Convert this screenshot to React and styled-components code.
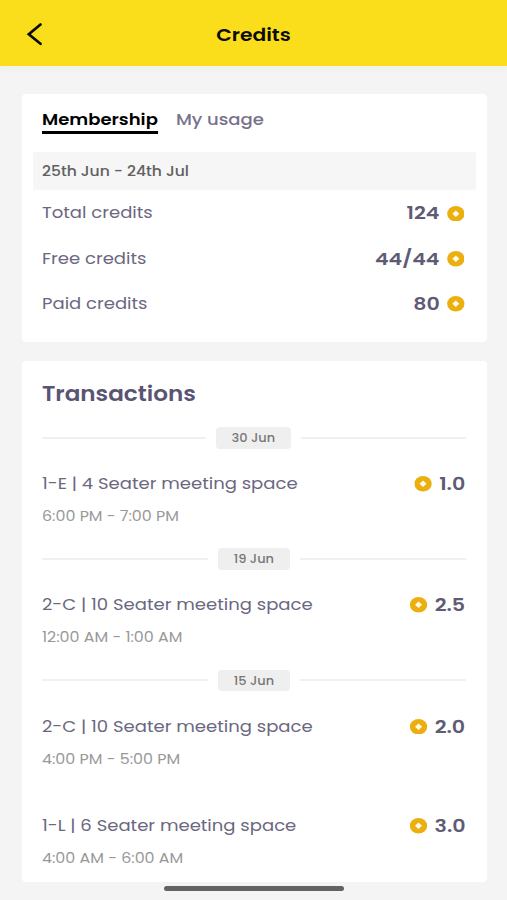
import React, { useState } from 'react';
import styled, { createGlobalStyle, css } from 'styled-components';

const GlobalStyle = createGlobalStyle`
  * {
    box-sizing: border-box;
  }
  body {
    margin: 0;
    background-color: #f4f4f4;
    font-family: Poppins, Inter, 'Liberation Sans', sans-serif;
    color: #5f5a78;
  }
`;

const wide = (origin) => css`
  transform: scaleX(1.127);
  transform-origin: ${origin} center;
`;

const Screen = styled.div`
  position: relative;
  width: 507px;
  height: 900px;
  overflow: hidden;
  background-color: #f4f4f4;
`;

const Header = styled.header`
  display: grid;
  grid-template-columns: 60px 1fr 60px;
  align-items: center;
  height: 66px;
  padding-top: 3px;
  background-color: #fade1b;
  box-shadow: 0 2px 10px rgba(0, 0, 0, 0.03);
  h1 {
    margin: 0;
    text-align: center;
    font-size: 18px;
    font-weight: 600;
    color: #0d0c02;
    ${wide('center')}
  }
`;

const BackButton = styled.button`
  display: flex;
  padding: 0 0 0 26px;
  border: 0;
  background: none;
  cursor: pointer;
`;

const Content = styled.main`
  display: flex;
  flex-direction: column;
  gap: 19px;
  padding: 28px 20.5px 0 22px;
`;

const Card = styled.section`
  background-color: white;
  border-radius: 4px;
`;

const MembershipCard = styled(Card)`
  height: 248px;
  padding: 14px 11px 0;
`;

const TransactionsCard = styled(Card)`
  height: 521px;
  padding: 0 21px 0 20px;
`;

const Tabs = styled.nav`
  display: flex;
  align-items: flex-start;
  gap: 16px;
  width: fit-content;
  height: 44px;
  margin-left: 9px;
  ${wide('left')}
`;

const Tab = styled.button`
  height: 26px;
  padding: 0 0 1px;
  border: 0;
  border-bottom: 3px solid ${(props) => (props.$active ? '#000' : 'transparent')};
  background: none;
  font: inherit;
  font-size: 16px;
  line-height: 21px;
  font-weight: ${(props) => (props.$active ? 600 : 500)};
  color: ${(props) => (props.$active ? '#000' : '#77728c')};
  cursor: pointer;
`;

const Period = styled.div`
  height: 38px;
  padding-left: 9px;
  border-radius: 2px;
  background-color: #f6f6f6;
  font-size: 13.8px;
  line-height: 39px;
  font-weight: 500;
  color: #606060;
  span {
    display: inline-block;
    ${wide('left')}
  }
`;

const CreditRow = styled.div`
  display: flex;
  align-items: center;
  justify-content: space-between;
  height: 45.3px;
  padding: 1.6px 11px 0 9px;
`;

const Label = styled.span`
  justify-self: start;
  font-size: 16px;
  line-height: 24px;
  color: #6b6780;
  ${wide('left')}
`;

const Amount = styled.span`
  display: flex;
  align-items: center;
  gap: 6.5px;
  font-size: 18.3px;
  font-weight: 600;
  line-height: 24px;
  color: #5f5b75;
  ${wide('right')}
`;

const Heading = styled.h2`
  margin: 0;
  height: 66px;
  width: fit-content;
  font-size: 20.5px;
  line-height: 66px;
  font-weight: 600;
  color: #5a5474;
  ${wide('left')}
`;

const DayDivider = styled.div`
  display: flex;
  align-items: center;
  gap: 10px;
  height: 21.5px;
  &::before,
  &::after {
    content: '';
    flex: 1;
    height: 2px;
    background-color: #f0f0f0;
  }
`;

const DayPill = styled.span`
  width: ${(props) => props.$width}px;
  height: 21.5px;
  border-radius: 4px;
  background-color: #efefef;
  text-align: center;
  font-size: 11.5px;
  line-height: 22.5px;
  font-weight: 500;
  color: #777;
  span {
    display: inline-block;
    ${wide('center')}
  }
`;

const Transaction = styled.div`
  display: grid;
  grid-template-columns: 1fr auto;
  align-content: start;
  row-gap: 10px;
  height: 99.75px;
  padding-top: 23.5px;
`;

const Time = styled.span`
  justify-self: start;
  font-size: 14.1px;
  line-height: 20px;
  color: #999;
  ${wide('left')}
`;

const HomeIndicator = styled.div`
  position: absolute;
  left: 164px;
  bottom: 9px;
  width: 180px;
  height: 5.5px;
  border-radius: 3px;
  background-color: #636363;
`;

const Coin = () => (
  <svg width="15.6" height="15.6" viewBox="0 0 16 16">
    <circle cx="8" cy="8" r="7.9" fill="#ebb010" />
    <path d="M8 4.6 L11.2 8 L8 11.4 L4.8 8 Z" fill="#fffbe8" />
  </svg>
);

const credits = [
  { label: 'Total credits', value: '124' },
  { label: 'Free credits', value: '44/44' },
  { label: 'Paid credits', value: '80' },
];

const days = [
  {
    date: '30 Jun',
    width: 75,
    items: [{ room: '1-E | 4 Seater meeting space', time: '6:00 PM - 7:00 PM', value: '1.0' }],
  },
  {
    date: '19 Jun',
    width: 72,
    items: [{ room: '2-C | 10 Seater meeting space', time: '12:00 AM - 1:00 AM', value: '2.5' }],
  },
  {
    date: '15 Jun',
    width: 72,
    items: [
      { room: '2-C | 10 Seater meeting space', time: '4:00 PM - 5:00 PM', value: '2.0' },
      { room: '1-L | 6 Seater meeting space', time: '4:00 AM - 6:00 AM', value: '3.0' },
    ],
  },
];

const App = () => {
  const [tab, setTab] = useState('Membership');
  return (
    <Screen>
      <GlobalStyle />
      <Header>
        <BackButton aria-label="Back">
          <svg width="17" height="24" viewBox="0 0 17 24" fill="none" stroke="#0d0c02" strokeWidth="2.7">
            <path d="M14.5 1.5 L2.8 11.3 L14.5 20.8" strokeLinecap="round" />
          </svg>
        </BackButton>
        <h1>Credits</h1>
      </Header>
      <Content>
        <MembershipCard>
          <Tabs>
            {['Membership', 'My usage'].map((name) => (
              <Tab key={name} $active={tab === name} onClick={() => setTab(name)}>
                {name}
              </Tab>
            ))}
          </Tabs>
          <Period>
            <span>25th Jun - 24th Jul</span>
          </Period>
          {credits.map(({ label, value }) => (
            <CreditRow key={label}>
              <Label>{label}</Label>
              <Amount>
                {value}
                <Coin />
              </Amount>
            </CreditRow>
          ))}
        </MembershipCard>
        <TransactionsCard>
          <Heading>Transactions</Heading>
          {days.map(({ date, width, items }) => (
            <React.Fragment key={date}>
              <DayDivider>
                <DayPill $width={width}>
                  <span>{date}</span>
                </DayPill>
              </DayDivider>
              {items.map(({ room, time, value }) => (
                <Transaction key={time}>
                  <Label>{room}</Label>
                  <Amount>
                    <Coin />
                    {value}
                  </Amount>
                  <Time>{time}</Time>
                </Transaction>
              ))}
            </React.Fragment>
          ))}
        </TransactionsCard>
      </Content>
      <HomeIndicator />
    </Screen>
  );
};

export default App;
